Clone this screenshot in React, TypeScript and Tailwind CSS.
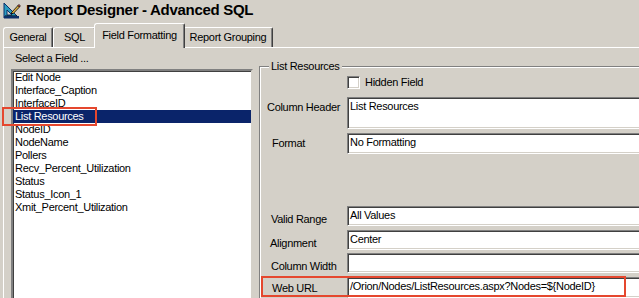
import type { ReactNode } from 'react'

const fields = [
  'Edit Node',
  'Interface_Caption',
  'InterfaceID',
  'List Resources',
  'NodeID',
  'NodeName',
  'Pollers',
  'Recv_Percent_Utilization',
  'Status',
  'Status_Icon_1',
  'Xmit_Percent_Utilization',
]

const sunken =
  'border border-t-[#808080] border-l-[#808080] border-b-white border-r-white shadow-[inset_1px_1px_0_#404040,inset_-1px_-1px_0_#d4d0c8] bg-white'

function TitleIcon() {
  return (
    <svg width="18" height="17" viewBox="0 0 18 17">
      {/* set square */}
      <path d="M1 1 L1 16 L16 16 Z" fill="#2a9cc0" stroke="#0b2f6a" strokeWidth="1" />
      <path d="M4 8 L4 13 L9 13 Z" fill="#d4d0c8" stroke="#0b2f6a" strokeWidth="1" />
      {/* ruler ticks */}
      <rect x="1" y="14" width="15" height="2" fill="#0b2f6a" />
      <path d="M3 14v-1M5 14v-1M7 14v-1M9 14v-1M11 14v-1M13 14v-1" stroke="#000" strokeWidth="1" />
      {/* pencil */}
      <path d="M8.5 10.5 L15 3.5 L16.5 5 L10 11.8 Z" fill="#e0b040" stroke="#000" strokeWidth="0.8" />
      <path d="M8.5 10.5 L7.8 12.4 L10 11.8 Z" fill="#000" />
      <path d="M15 3.5 L16 2.4 L17.4 3.9 L16.5 5 Z" fill="#c04030" stroke="#000" strokeWidth="0.6" />
    </svg>
  )
}

function Tab({ label, width, active }: { label: string; width: string; active?: boolean }) {
  return (
    <div
      className={`${width} ${
        active ? 'h-[25px] -mb-px -mx-[2px] relative z-10 pb-[2px]' : 'h-[20px]'
      } flex items-center justify-center bg-[#d4d0c8] border-t border-l border-white border-r border-r-[#404040] rounded-tl-[3px] rounded-tr-[2px] shadow-[inset_-1px_0_0_#808080]`}
    >
      {label}
    </div>
  )
}

function Row({
  label,
  labelMl,
  boxH,
  mt,
  align,
  children,
}: {
  label: string
  labelMl: string
  boxH: string
  mt: string
  align: string
  children?: ReactNode
}) {
  return (
    <div className={`flex ${align} ${mt}`}>
      <div className="w-[80px] shrink-0">
        <span className={`block ${labelMl} leading-[13px] whitespace-nowrap`}>{label}</span>
      </div>
      <div className={`${sunken} ${boxH} w-[320px] shrink-0 pl-[2px] pt-[2px] leading-[13px] whitespace-nowrap`}>
        {children}
      </div>
    </div>
  )
}

export default function App() {
  return (
    <div className="relative w-[639px] h-[298px] overflow-hidden bg-[#d4d0c8] text-black text-[11px] tracking-[-0.3px] font-['Liberation_Sans',Arial,sans-serif]">
      {/* title */}
      <div className="h-[23px] flex items-start pt-[1px] pl-[3px]">
        <div className="mt-[1px]">
          <TitleIcon />
        </div>
        <span className="ml-[5px] text-[15px] font-bold leading-[18px]">Report Designer - Advanced SQL</span>
      </div>

      {/* tabs */}
      <div className="h-[24px] flex items-end pl-[3px]">
        <Tab label="General" width="w-[50px]" />
        <Tab label="SQL" width="w-[43px]" />
        <Tab label="Field Formatting" width="w-[91px]" active />
        <Tab label="Report Grouping" width="w-[90px]" />
      </div>

      {/* panel */}
      <div className="ml-[3px] h-[260px] border-t border-l border-white flex">
        {/* field list */}
        <div className="w-[255px] shrink-0 flex flex-col">
          <div className="mt-[4px] ml-[11px] leading-[13px]">Select a Field ...</div>
          <div className="mt-[4px] ml-[7px] w-[242px] h-[240px] border-2 border-t-[#808080] border-l-[#808080] border-b-[#d4d0c8] border-r-[#d4d0c8] shadow-[inset_1px_1px_0_#404040,inset_-1px_-1px_0_#fff] bg-white">
            {fields.map((f) => (
              <div
                key={f}
                className={`h-[13px] leading-[13px] pl-[2px] whitespace-nowrap ${
                  f === 'List Resources' ? 'bg-[#0a246a] text-white' : ''
                }`}
              >
                {f}
              </div>
            ))}
          </div>
        </div>

        {/* group box */}
        <div className="relative mt-[18px] flex-1 h-[240px] border border-[#808080] border-r-0 shadow-[inset_1px_1px_0_#fff]">
          <span className="absolute -top-[7px] left-[9px] px-[2px] bg-[#d4d0c8] leading-[13px]">List Resources</span>
          <div className="pl-[7px] pt-[9px]">
            <div className="flex items-center h-[13px]">
              <div className="w-[80px] shrink-0" />
              <div className={`${sunken} w-[13px] h-[13px]`} />
              <span className="ml-[5px] leading-[13px]">Hidden Field</span>
            </div>
            <Row label="Column Header" labelMl="ml-0 mt-[4px]" boxH="h-[32px]" mt="mt-[8px]" align="items-start">
              List Resources
            </Row>
            <Row label="Format" labelMl="ml-[5px]" boxH="h-[21px]" mt="mt-[4px]" align="items-center">
              No Formatting
            </Row>
            <Row label="Valid Range" labelMl="ml-[4px]" boxH="h-[20px]" mt="mt-[52px]" align="items-end">
              All Values
            </Row>
            <Row label="Alignment" labelMl="ml-[3px]" boxH="h-[20px]" mt="mt-[4px]" align="items-end">
              Center
            </Row>
            <Row label="Column Width" labelMl="ml-[4px]" boxH="h-[20px]" mt="mt-[3px]" align="items-end">
              {''}
            </Row>
            <Row label="Web URL" labelMl="ml-[5px] mb-[3px]" boxH="h-[21px]" mt="mt-[4px]" align="items-end">
              /Orion/Nodes/ListResources.aspx?Nodes=${'{'}NodeID{'}'}
            </Row>
          </div>
        </div>
      </div>

      {/* red annotation boxes */}
      <div className="absolute left-[2px] top-[107px] w-[95px] h-[19px] border-2 border-[#e5472e]" />
      <div className="absolute left-[261px] top-[276px] w-[365px] h-[21px] border-2 border-[#e5472e]" />
    </div>
  )
}
